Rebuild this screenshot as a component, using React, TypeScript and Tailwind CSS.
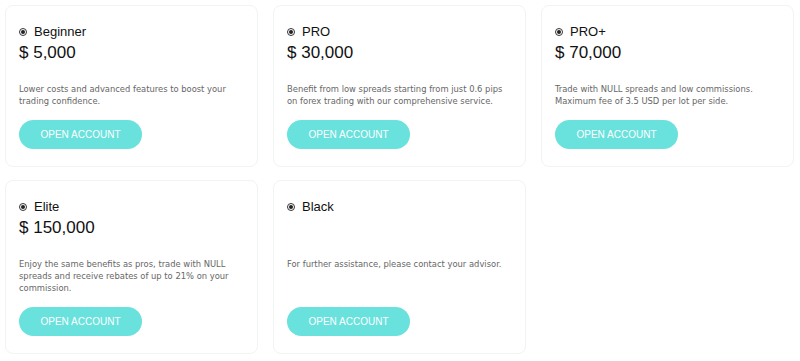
const plans = [
  {
    name: "Beginner",
    price: "$ 5,000",
    text: "Lower costs and advanced features to boost your trading confidence.",
  },
  {
    name: "PRO",
    price: "$ 30,000",
    text: "Benefit from low spreads starting from just 0.6 pips on forex trading with our comprehensive service.",
  },
  {
    name: "PRO+",
    price: "$ 70,000",
    text: "Trade with NULL spreads and low commissions. Maximum fee of 3.5 USD per lot per side.",
  },
  {
    name: "Elite",
    price: "$ 150,000",
    text: "Enjoy the same benefits as pros, trade with NULL spreads and receive rebates of up to 21% on your commission.",
  },
  {
    name: "Black",
    price: "",
    text: "For further assistance, please contact your advisor.",
  },
];

function RadioDot() {
  return (
    <span className="flex h-[8px] w-[8px] items-center justify-center rounded-full border border-[#333]">
      <span className="h-[4px] w-[4px] rounded-full bg-[#222]" />
    </span>
  );
}

export default function App() {
  return (
    <div className="min-h-[361px] w-[800px] bg-white px-[5px] pt-[5px] font-['Liberation_Sans',Arial,sans-serif]">
      <div className="grid grid-cols-[253px_253px_253px] gap-x-[15px] gap-y-[13px]">
        {plans.map((plan) => (
          <div
            key={plan.name}
            className="flex flex-col rounded-[8px] border border-[#f1f3f4] px-[13px] pt-[18px] pb-[17px]"
          >
            {/* Title */}
            <div className="flex h-[16px] items-center gap-[7px]">
              <RadioDot />
              <span className="text-[13px] leading-[16px] text-[#111]">{plan.name}</span>
            </div>

            {/* Price */}
            <div className="mt-[2px] h-[22px] text-[17px] leading-[22px] text-[#111]">
              {plan.price}
            </div>

            {/* Description */}
            <p className="mt-[19px] mb-[13px] font-['DejaVu_Sans_Condensed','DejaVu_Sans',sans-serif] text-[9.3px] leading-[12px] text-[#666]">
              {plan.text}
            </p>

            {/* Button */}
            <button className="mt-auto h-[29px] w-[123px] rounded-full bg-[#69e1dc] text-[10px] text-white">
              OPEN ACCOUNT
            </button>
          </div>
        ))}
      </div>
    </div>
  );
}
